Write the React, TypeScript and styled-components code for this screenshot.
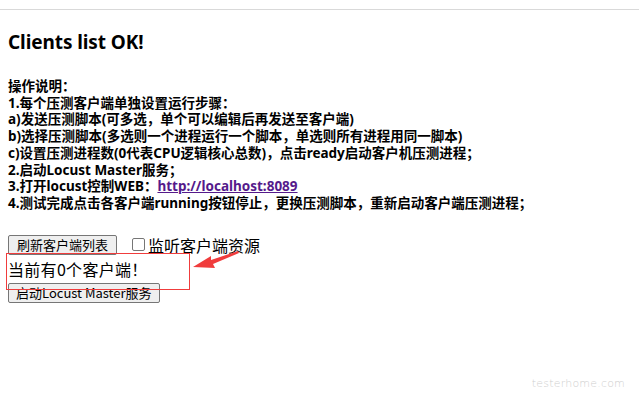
import React from 'react'
import styled, { createGlobalStyle } from 'styled-components'

const GlobalStyle = createGlobalStyle`
  html, body {
    margin: 0;
    padding: 0;
    background: #fff;
  }
  body {
    width: 639px;
    height: 399px;
    overflow: hidden;
    position: relative;
    font-family: "Noto Sans", "Noto Sans CJK SC", sans-serif;
    color: #000;
  }
`

const TopRule = styled.div`
  margin-top: 9px;
  height: 1px;
  background: #d9d9d9;
`

const Page = styled.div`
  padding: 0 8px;
  position: relative;
`

const Heading = styled.h3`
  margin: 20px 0 0;
  font-size: 19px;
  line-height: 24px;
  font-weight: 700;
  font-family: "Noto Sans", sans-serif;
  letter-spacing: -0.1px;
`

const Steps = styled.div`
  margin-top: 24px;
  font-size: 13.5px;
  line-height: 16.7px;
  font-weight: 700;
  font-family: "Noto Sans", "Noto Sans CJK SC", sans-serif;
`

const Step = styled.div`
  white-space: nowrap;
`

const WebLink = styled.a`
  color: #551a8b;
  text-decoration: underline;
`

const ButtonRow = styled.div`
  margin-top: 23px;
  display: flex;
  align-items: center;
  height: 20px;
`

const Btn = styled.button`
  height: 20px;
  padding: 0 7px;
  font-size: 13px;
  font-family: "Noto Sans CJK SC", sans-serif;
  color: #000;
  background: #efefef;
  border: 1px solid #767676;
  border-radius: 2px;
  line-height: 18px;
  white-space: nowrap;
`

const WideBtn = styled(Btn)`
  padding: 0 8px;
`

const CheckLabel = styled.label`
  display: flex;
  align-items: center;
  margin-left: 15px;
  font-size: 16px;
  font-family: "Noto Sans CJK SC", sans-serif;
  white-space: nowrap;
`

const Box = styled.span`
  width: 11px;
  height: 11px;
  border: 1px solid #767676;
  border-radius: 2px;
  margin-right: 3px;
  background: #fff;
`

const Count = styled.div`
  margin-top: 3px;
  font-size: 16px;
  line-height: 23px;
  font-family: "Noto Sans CJK SC", sans-serif;
  letter-spacing: 0.3px;
`

const Mark = styled.div`
  position: absolute;
  left: 6px;
  top: 253px;
  width: 184px;
  height: 37px;
  border: 1px solid #f03c3c;
  box-sizing: border-box;
`

const Arrow = styled.svg`
  position: absolute;
  left: 190px;
  top: 248px;
`

const Watermark = styled.div`
  position: absolute;
  right: 14px;
  bottom: 9px;
  font-size: 11px;
  color: #cfcfcf;
  font-family: "DejaVu Sans", sans-serif;
  font-weight: 300;
  letter-spacing: 0.2px;
`

const App = () => {
  return (
    <>
      <GlobalStyle />
      <TopRule />
      <Page>
        <Heading>Clients list OK!</Heading>
        <Steps>
          <Step>操作说明：</Step>
          <Step>1.每个压测客户端单独设置运行步骤：</Step>
          <Step>a)发送压测脚本(可多选，单个可以编辑后再发送至客户端)</Step>
          <Step>b)选择压测脚本(多选则一个进程运行一个脚本，单选则所有进程用同一脚本)</Step>
          <Step>c)设置压测进程数(0代表CPU逻辑核心总数)，点击ready启动客户机压测进程；</Step>
          <Step>2.启动Locust Master服务；</Step>
          <Step>
            3.打开locust控制WEB：<WebLink href="#">http://localhost:8089</WebLink>
          </Step>
          <Step>4.测试完成点击各客户端running按钮停止，更换压测脚本，重新启动客户端压测进程；</Step>
        </Steps>
        <ButtonRow>
          <WideBtn>刷新客户端列表</WideBtn>
          <CheckLabel>
            <Box />
            监听客户端资源
          </CheckLabel>
        </ButtonRow>
        <Count>当前有0个客户端！</Count>
        <Btn>启动Locust Master服务</Btn>
      </Page>
      <Mark />
      <Arrow width="52" height="24" viewBox="0 0 52 24">
        <path d="M48 3 L21 12 L21 8 L3 19 L25 20 L23 16 L49 5 Z" fill="#f03c3c" />
      </Arrow>
      <Watermark>testerhome.com</Watermark>
    </>
  )
}

export default App
